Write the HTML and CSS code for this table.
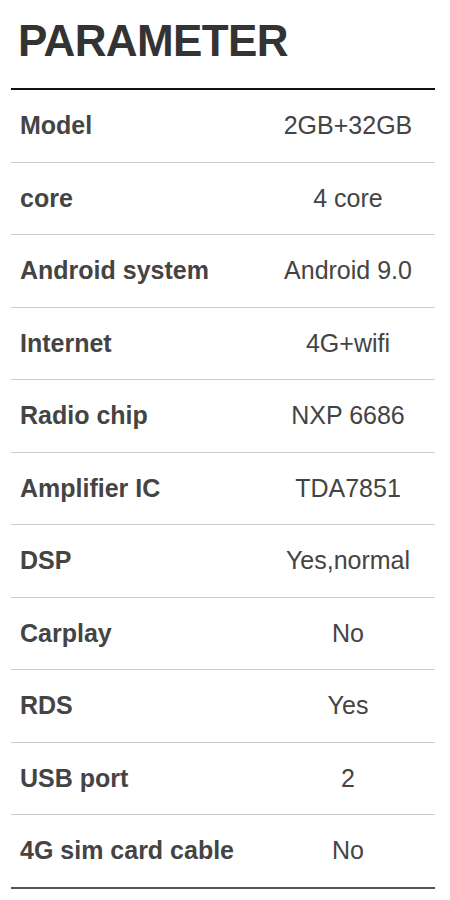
FILE: index.html
```html
<!DOCTYPE html>
<html lang="en">
<head>
    <meta charset="UTF-8">
    <meta name="viewport" content="width=device-width, initial-scale=1.0">
    <title>Parameter</title>
    <link rel="stylesheet" href="styles.css">
</head>
<body>
    <div class="page">
        <h1>PARAMETER</h1>

        <div class="specs">
            <div class="row"><span class="label">Model</span><span class="value">2GB+32GB</span></div>
            <div class="row"><span class="label">core</span><span class="value">4 core</span></div>
            <div class="row"><span class="label">Android system</span><span class="value">Android 9.0</span></div>
            <div class="row"><span class="label">Internet</span><span class="value">4G+wifi</span></div>
            <div class="row"><span class="label">Radio chip</span><span class="value">NXP 6686</span></div>
            <div class="row"><span class="label">Amplifier IC</span><span class="value">TDA7851</span></div>
            <div class="row"><span class="label">DSP</span><span class="value">Yes,normal</span></div>
            <div class="row"><span class="label">Carplay</span><span class="value">No</span></div>
            <div class="row"><span class="label">RDS</span><span class="value">Yes</span></div>
            <div class="row"><span class="label">USB port</span><span class="value">2</span></div>
            <div class="row"><span class="label">4G sim card cable</span><span class="value">No</span></div>
        </div>
    </div>
</body>
</html>
```

FILE: styles.css
```css
body {
    margin: 0;
    background: #fff;
    font-family: "Liberation Sans", Arial, sans-serif;
    color: #444;
}

.page {
    width: 424px;
    margin-left: 11px;
}

h1 {
    margin: 0;
    padding: 16px 0 0 7px;
    height: 72px;
    font-size: 44px;
    line-height: 50px;
    font-weight: bold;
    color: #333;
    letter-spacing: -0.6px;
}

.specs {
    border-top: 2px solid #111;
    border-bottom: 2px solid #555;
}

.row {
    display: flex;
    align-items: center;
    height: 71.5px;
    border-bottom: 1px solid #ccc;
    font-size: 25px;
}

.row:last-child {
    border-bottom: none;
}

.label {
    box-sizing: border-box;
    width: 250px;
    padding-left: 9px;
    font-weight: bold;
    color: #444;
}

.value {
    flex: 1;
    text-align: center;
    color: #444;
}
```
